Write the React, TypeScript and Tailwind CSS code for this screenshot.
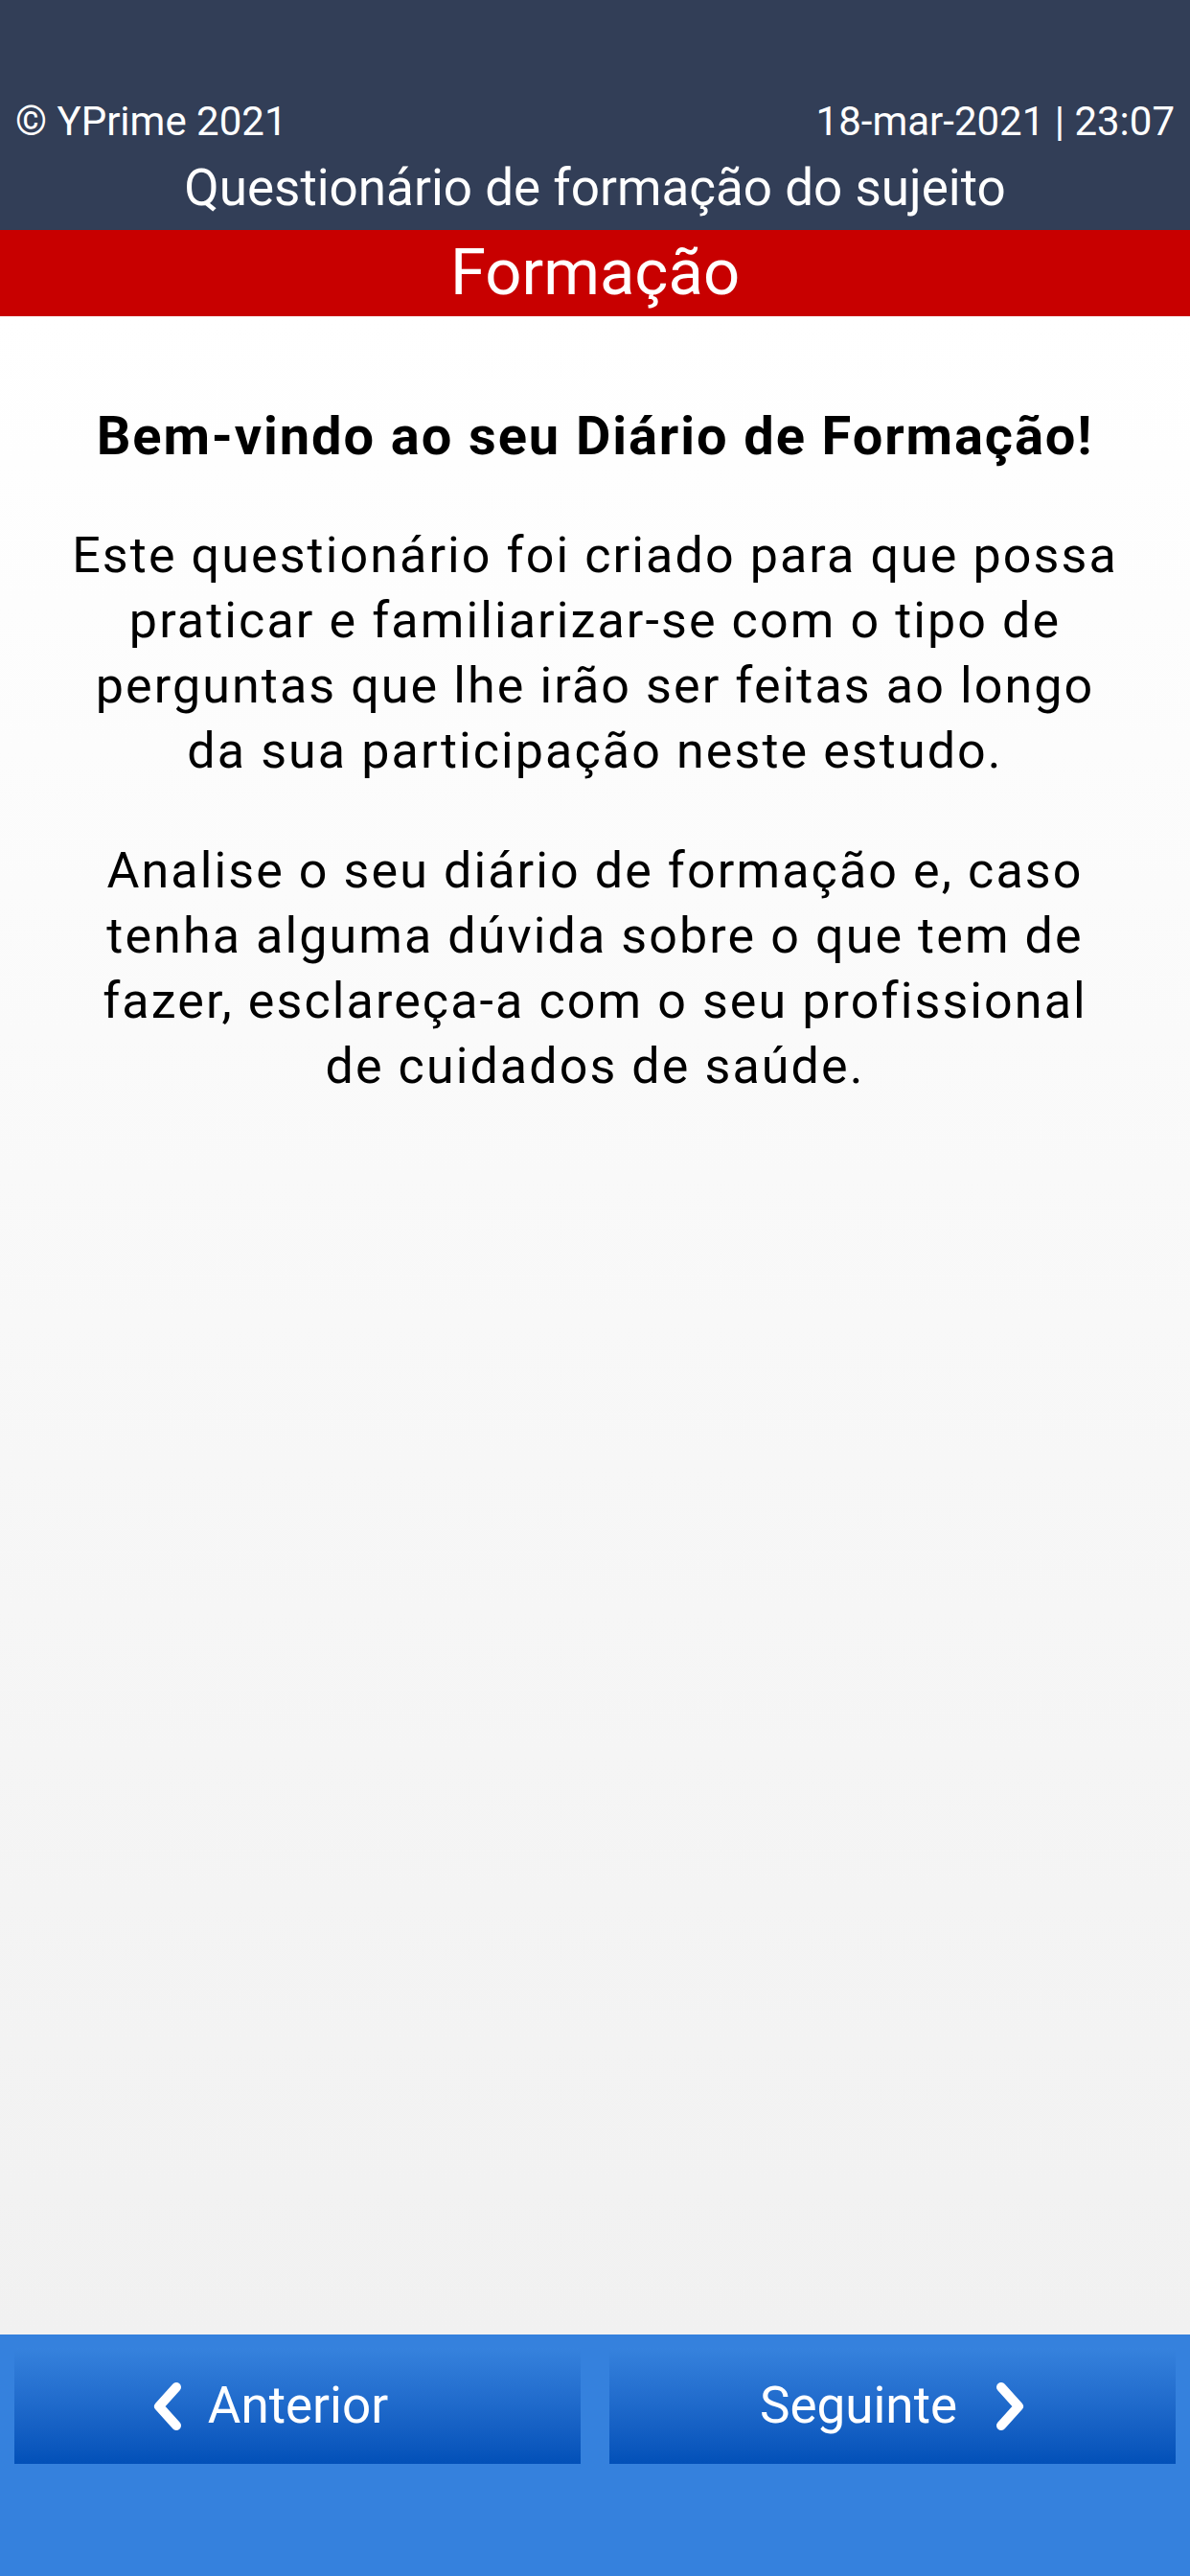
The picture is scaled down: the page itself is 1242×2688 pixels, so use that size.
const font = { fontFamily: "Roboto, 'Liberation Sans', sans-serif" };

function Chevron({ dir }: { dir: "left" | "right" }) {
  const pts = dir === "left" ? "25,6 7,26 25,46" : "7,6 25,26 7,46";
  return (
    <svg width="32" height="52" viewBox="0 0 32 52" className="shrink-0">
      <polyline
        points={pts}
        fill="none"
        stroke="white"
        strokeWidth="10"
        strokeLinecap="round"
        strokeLinejoin="round"
      />
    </svg>
  );
}

export default function App() {
  return (
    <div className="flex h-[2688px] w-[1242px] flex-col" style={font}>
      {/* Header */}
      <div className="h-[240px] bg-[#323e57] pt-[106px] text-white">
        <div className="flex items-start justify-between pl-[16px] pr-[16px] text-[42px] leading-[42px]">
          <span>© YPrime 2021</span>
          <span>18-mar-2021 | 23:07</span>
        </div>
        <div className="mt-[22px] text-center text-[53px] leading-[53px]">
          Questionário de formação do sujeito
        </div>
      </div>

      {/* Section bar */}
      <div className="flex h-[90px] items-center justify-center bg-[#c80000] pb-[2px] text-[67px] leading-[67px] text-white">
        Formação
      </div>

      {/* Body */}
      <div className="flex-1 bg-gradient-to-b from-white to-[#f1f1f1] px-[73px] pt-[91px] text-center text-black">
        <h1 className="text-[56px] font-bold leading-[68px] tracking-[1.9px]">
          Bem-vindo ao seu Diário de Formação!
        </h1>
        <p className="mt-[57px] text-[52px] leading-[68px] tracking-[2.1px]">
          Este questionário foi criado para que possa praticar e familiarizar-se com o tipo de perguntas que lhe irão ser feitas ao longo da sua participação neste estudo.
        </p>
        <p className="mt-[57px] text-[52px] leading-[68px] tracking-[2.1px]">
          Analise o seu diário de formação e, caso tenha alguma dúvida sobre o que tem de fazer, esclareça-a com o seu profissional de cuidados de saúde.
        </p>
      </div>

      {/* Footer nav */}
      <div className="grid h-[252px] grid-cols-2 items-start gap-[30px] bg-[#3581dd] px-[15px] pt-[14px]">
        <button className="flex h-[121px] items-center justify-center gap-[26px] bg-gradient-to-b from-[#3682dd] to-[#0250b8] pr-[57px] text-[53px] leading-[53px] text-white">
          <Chevron dir="left" />
          <span>Anterior</span>
        </button>
        <button className="flex h-[121px] items-center justify-center gap-[39px] bg-gradient-to-b from-[#3682dd] to-[#0250b8] text-[53px] leading-[53px] text-white">
          <span>Seguinte</span>
          <Chevron dir="right" />
        </button>
      </div>
    </div>
  );
}
